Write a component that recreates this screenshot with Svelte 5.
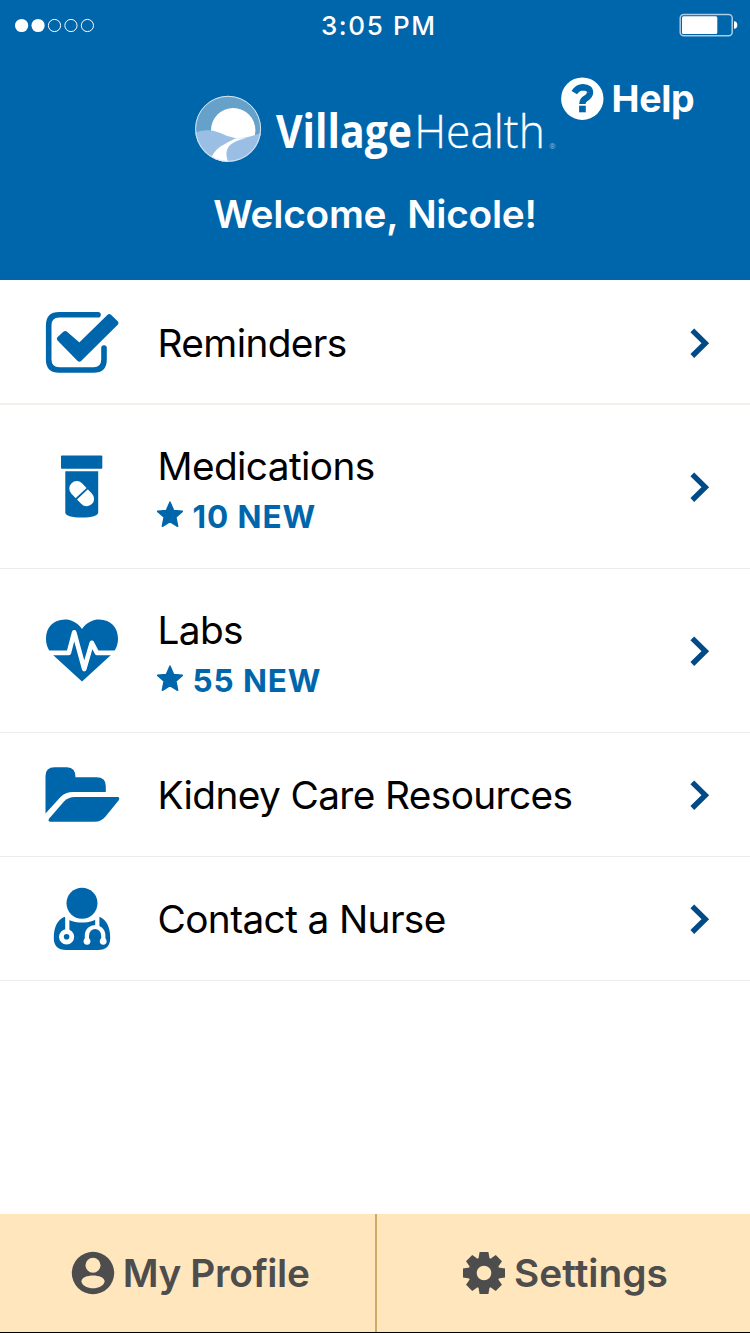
<script>
  const rows = [
    { id: 'reminders', label: 'Reminders' },
    { id: 'medications', label: 'Medications', count: '10 NEW' },
    { id: 'labs', label: 'Labs', count: '55 NEW' },
    { id: 'resources', label: 'Kidney Care Resources' },
    { id: 'nurse', label: 'Contact a Nurse' }
  ];
  const signal = [true, true, false, false, false];

  const tooth = 'M-4.4 -21H4.4L5.8 -13H-5.8Z';
  const angles = [0, 45, 90, 135, 180, 225, 270, 315];
</script>

<div class="screen">
  <header>
    <div class="status">
      <svg class="signal" width="80" height="16" viewBox="14.5 16.5 80 16">
        {#each signal as on, i}
          <circle cx={21.1 + i * 16.45} cy="25" r={on ? 6.6 : 6.1} fill={on ? '#fff' : 'none'} stroke="#fff" stroke-width={on ? 0 : 1} />
        {/each}
      </svg>
      <span class="time">3:05 PM</span>
      <svg class="battery" width="60" height="24" viewBox="679 12.2 60 24">
        <rect x="680.2" y="13.7" width="52" height="21.3" rx="3.5" fill="none" stroke="#a9cce4" stroke-width="1.5" />
        <rect x="682" y="15.5" width="35.3" height="17.8" rx="1.5" fill="#fff" />
        <path d="M734 20.5Q737.3 20.5 737.3 24.3T734 28Z" fill="#fff" />
      </svg>
    </div>

    <div class="brand">
      <svg class="logo" width="370" height="80" viewBox="190 90 370 80">
        <clipPath id="disc"><circle cx="228.1" cy="128.8" r="33" /></clipPath>
        <g clip-path="url(#disc)">
          <rect x="194" y="95" width="69" height="69" fill="#66a1ca" />
          <circle cx="233.2" cy="130.2" r="22.2" fill="#fff" />
          <path d="M194 133Q207 128 219 132.5Q227 136.5 236 138.3Q248 138.5 263 132V164H194Z" fill="#9bbfe4" />
          <path d="M236 138.3C225 144 214 148 211 159L214 164H229C223 151 227 142 246 138.3Z" fill="#fff" />
        </g>
        <circle cx="228.1" cy="128.8" r="32.5" fill="none" stroke="#d5e6f2" stroke-width="1" />
        <text class="village" x="276" y="148" textLength="136" lengthAdjust="spacingAndGlyphs">Village</text>
        <text class="health" x="414.3" y="148" textLength="130.5" lengthAdjust="spacingAndGlyphs">Health</text>
        <text class="mark" x="549" y="149">®</text>
      </svg>
      <div class="help">
        <svg width="44" height="44" viewBox="560 77 44 44">
          <circle cx="582.3" cy="98.7" r="21.2" fill="#fff" />
          <path d="M574.3 92.7Q577.5 87.2 583 87.2Q590.3 87.4 590 93Q589.7 96 586 98.3Q582.4 100.3 582.4 104" fill="none" stroke="#0066ab" stroke-width="6.4" />
          <rect x="579.1" y="105.7" width="6.7" height="6.6" fill="#0066ab" />
        </svg>
        <span>Help</span>
      </div>
    </div>

    <h1>Welcome, Nicole!</h1>
  </header>

  <main>
    {#each rows as row}
      <div class="row" class:tall={row.count}>
        <div class="icon">
          {#if row.id === 'reminders'}
            <svg width="84" height="84" viewBox="40 301 84 84">
              <path d="M98 314.7H59.2Q48.7 314.7 48.7 325.2V359.5Q48.7 370 59.2 370H93.6Q104 370 104 359.5V348" fill="none" stroke="#0066ab" stroke-width="5.6" stroke-linecap="round" />
              <path d="M59.8 338.7L65.2 333.8L79.4 346.2L109.3 316.9L115.5 323L79.4 358.8Z" fill="#0066ab" stroke="#0066ab" stroke-width="5.6" stroke-linejoin="round" />
            </svg>
          {:else if row.id === 'medications'}
            <svg width="84" height="84" viewBox="40 445 84 84">
              <rect x="61" y="455.5" width="41.3" height="13.3" rx="0.8" fill="#0066ab" />
              <path d="M65.3 471.2H98.2V512.5Q97.5 517.5 81.7 517.5T65.3 512.5Z" fill="#0066ab" />
              <path d="M76.7 488.5L86.7 498.8" stroke="#fff" stroke-width="14.8" stroke-linecap="round" />
              <path d="M88 487.8L75.6 499.5" stroke="#0066ab" stroke-width="1.8" />
            </svg>
          {:else if row.id === 'labs'}
            <svg width="84" height="84" viewBox="40 609 84 84">
              <path d="M82 629C77 622 71 619.5 65 619.5C53 619.5 46 628 46 638.5C46 645 48 650 53 655L82 681.5L111 655C116 650 118 645 118 638.5C118 628 111 619.5 99 619.5C93 619.5 87 622 82 629Z" fill="#0066ab" />
              <path d="M45 652.8H68.8L74.2 632.3L84.2 669L91.8 642.8L97 652.8H119" fill="none" stroke="#fff" stroke-width="4.7" stroke-linejoin="round" />
            </svg>
          {:else if row.id === 'resources'}
            <svg width="84" height="84" viewBox="40 753 84 84" fill="#0066ab">
              <path d="M45.5 813.5V776Q45.5 767.3 54.5 767.3H67Q75.5 767.3 75.5 777.3H96.5Q105.8 777.3 105.8 786V792H73Q65.5 792 60.5 797Z" />
              <path d="M50.5 821.8Q47.3 821.5 49.2 818.5L64 801.5Q68 797 75 797H117.5Q120.5 797.3 118.5 800.5L105.5 816.5Q101 821.8 94.5 821.8Z" />
            </svg>
          {:else}
            <svg width="84" height="84" viewBox="40 877 84 84">
              <circle cx="82" cy="903.2" r="15.5" fill="#0066ab" />
              <path d="M64.5 916.8C71 924.5 93 924.5 99.5 916.8C107 920 110.2 928 110.2 938Q110.2 950 98 950H66Q53.8 950 53.8 938C53.8 928 57 920 64.5 916.8Z" fill="#0066ab" />
              <g fill="none" stroke="#fff" stroke-width="4.2">
                <path d="M67.3 914V931M97.3 914V927" />
                <path d="M86.9 941.5V936C86.9 924 103.3 924 103.3 936V941.5" />
              </g>
              <path d="M66.5 917Q82 924.5 97.5 917" fill="none" stroke="#fff" stroke-width="1.5" />
              <circle cx="66.6" cy="936.8" r="5.2" fill="#0066ab" stroke="#fff" stroke-width="4.8" />
              <circle cx="87" cy="941.3" r="3.4" fill="#fff" />
              <circle cx="103.2" cy="941.3" r="3.4" fill="#fff" />
            </svg>
          {/if}
        </div>
        <div class="text">
          <span class="label">{row.label}</span>
          {#if row.count}
            <span class="count">
              <svg width="28" height="28" viewBox="-14 -14 28 28">
                <path d="M0 -12.8L3.6 -4.5L12.3 -3.7L5.8 2.1L7.6 11.2L0 6.6L-7.6 11.2L-5.8 2.1L-12.3 -3.7L-3.6 -4.5Z" fill="#0066ab" stroke="#0066ab" stroke-width="1.6" stroke-linejoin="round" />
              </svg>
              <span>{row.count}</span>
            </span>
          {/if}
        </div>
        <svg class="chevron" width="24" height="34" viewBox="688 326 24 34">
          <path d="M692.3 330.4L705.3 343.2L692.3 356" fill="none" stroke="#004b87" stroke-width="5.4" />
        </svg>
      </div>
    {/each}
  </main>

  <footer>
    <div class="tab profile">
      <svg width="44" height="44" viewBox="-22 -22 44 44">
        <circle r="21.2" fill="#4d4d4d" />
        <circle cy="-7.7" r="7.5" fill="#ffe6bd" />
        <path d="M-11.6 8.5C-11.6 0.5 11.6 0.5 11.6 8.5C10 17.5 -10 17.5 -11.6 8.5Z" fill="#ffe6bd" />
      </svg>
      <span>My Profile</span>
    </div>
    <div class="tab settings">
      <svg width="44" height="44" viewBox="-22 -22 44 44">
        <circle r="11.5" fill="none" stroke="#4d4d4d" stroke-width="8.4" />
        {#each angles as a}
          <path d={tooth} transform="rotate({a})" fill="#4d4d4d" />
        {/each}
      </svg>
      <span>Settings</span>
    </div>
  </footer>
</div>

<style>
  .screen {
    width: 750px;
    height: 1333px;
    display: flex;
    flex-direction: column;
    background: #fff;
    font-family: Inter, 'Liberation Sans', sans-serif;
    white-space: nowrap;
    overflow: hidden;
  }
  svg { display: block; flex: none; }
  header {
    height: 280px;
    background: #0066ab;
    color: #fff;
    display: flex;
    flex-direction: column;
  }
  .status {
    height: 48px;
    display: grid;
    grid-template-columns: 1fr auto 1fr;
    align-items: center;
    padding: 0 11px 0 14.5px;
  }
  .battery { justify-self: end; }
  .time { font-size: 26px; font-weight: 500; letter-spacing: 1.6px; line-height: 48px; padding: 2px 0 0 4px; }
  .brand {
    height: 122px;
    display: flex;
    align-items: flex-start;
    padding-left: 190px;
  }
  .logo { margin-top: 42px; }
  .village { font: 700 46px 'Open Sans', sans-serif; fill: #fff; }
  .health { font: 300 46px 'Open Sans', sans-serif; fill: #fff; stroke: #fff; stroke-width: 0.3px; }
  .mark { font: 400 8px 'Open Sans', sans-serif; fill: #8fbbdb; }
  .help { display: flex; align-items: center; gap: 7.5px; margin: 29px 0 0; }
  .help span { font-size: 37.5px; font-weight: 700; letter-spacing: -0.3px; line-height: 44px; }
  h1 {
    margin: 19px 0 0;
    text-align: center;
    font-size: 38.8px;
    font-weight: 600;
    letter-spacing: -0.25px;
    line-height: 50px;
  }
  main { flex: 1; padding-top: 1px; }
  .row {
    height: 124px;
    box-sizing: border-box;
    border-bottom: 1px solid #ececec;
    display: flex;
    align-items: center;
    padding: 1px 38px 0 40px;
  }
  .row.tall { height: 164px; }
  .row:first-child { border-bottom: 2px solid #f3eeea; padding-top: 2px; }
  .icon { width: 84px; }
  .text { flex: 1; padding-left: 33.5px; display: flex; flex-direction: column; }
  .tall .text { padding-top: 6px; }
  .label { color: #000; font-size: 38.8px; line-height: 48px; font-weight: 400; letter-spacing: -0.62px; }
  .count { display: flex; align-items: center; color: #0066ab; margin: 5px 0 0 -1.5px; height: 44px; gap: 8.5px; }
  .count svg { margin-top: -4px; }
  .count span { font-size: 31.5px; font-weight: 700; letter-spacing: 0.9px; }
  footer {
    height: 118px;
    display: flex;
    background: #ffe6bd;
    border-bottom: 1px solid #000;
    color: #4d4d4d;
  }
  .tab { display: flex; align-items: center; box-sizing: border-box; gap: 8px; font-size: 38.8px; font-weight: 600; }
  .tab span { margin-top: -2px; }
  .profile { width: 377px; border-right: 2px solid #d0ab68; padding-left: 70.8px; letter-spacing: -0.38px; }
  .settings { flex: 1; padding-left: 85px; }
</style>
